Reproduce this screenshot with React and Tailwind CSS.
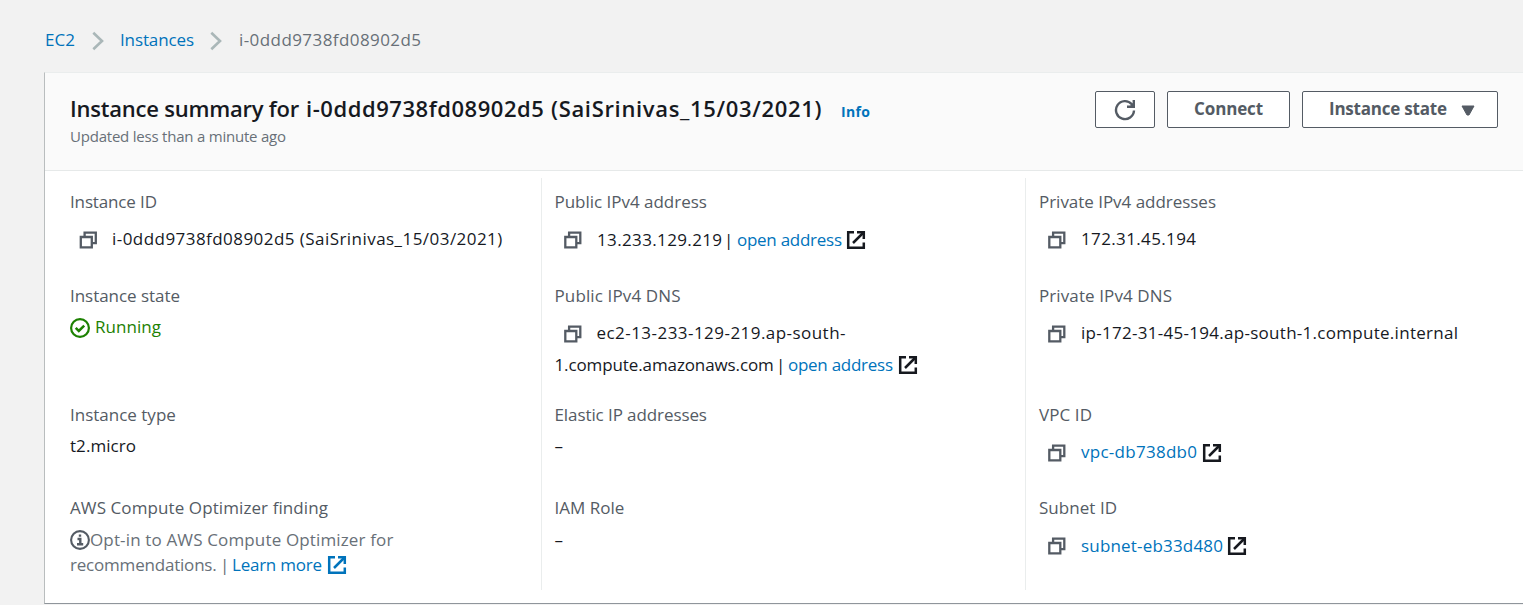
import React from "react";

const CopyIcon = ({ className = "translate-y-px" }) => (
  <svg className={`mr-[13px] ml-[9px] size-[20px] shrink-0 ${className}`} viewBox="0 0 20 20" fill="none" stroke="#545b64" strokeWidth="2.3">
    <path d="M1.800 7h11v10.300h-11z" />
    <path d="M5.600 7V2.600h11.200v10.600h-4" />
  </svg>
);

const ExternalIcon = ({ className }) => (
  <svg className={`size-[20px] shrink-0 ${className}`} viewBox="0 0 20 20" fill="none" stroke="currentColor" strokeWidth="2.5">
    <path d="M8 2.200H2.200v15.600h15.600V12.500" />
    <path d="M11 2.200h6.800V9" />
    <path d="M7 13 17.500 2.500" />
  </svg>
);

const Chevron = ({ className }) => (
  <svg className={`h-[20px] w-[13px] shrink-0 translate-y-px ${className}`} viewBox="0 0 13 20" fill="none" stroke="#aab7b8" strokeWidth="2.6">
    <path d="m1.300 1.800 8.700 8.200-8.700 8.200" />
  </svg>
);

const Field = ({ label, spacing = "", height, children }) => (
  <div className={`flex flex-col ${height}`}>
    <div className={`h-6 text-[#545b64] leading-6 ${spacing}`}>{label}</div>
    {children}
  </div>
);

const Plain = ({ children, className = "mt-[6px]" }) => <div className={`flex h-[25px] items-center leading-[25px] ${className}`}>{children}</div>;
const Line = ({ children, className = "" }) => <div className={`flex h-8 items-center leading-8 ${className}`}>{children}</div>;
const Link = ({ children, className = "" }) => (
  <a href="#" className={`text-[#0073bb] ${className}`}>
    {children}
  </a>
);

export default function App() {
  return (
    <div className="h-[605px] w-[1523px] overflow-hidden bg-[#f2f2f2] pl-[44px] font-['Open_Sans',sans-serif] text-[17px] whitespace-nowrap text-[#16191f]">
      <nav className="flex h-[72px] items-center pt-[7px] pl-px leading-6">
        <Link className="w-[47px] tracking-[0.06px]">EC2</Link>
        <Chevron className="mr-[15px]" />
        <Link className="w-[90px] tracking-[-0.125px]">Instances</Link>
        <Chevron className="mr-[16px]" />
        <span className="tracking-[0.422px] text-[#687078]">i-0ddd9738fd08902d5</span>
      </nav>

      <main className="h-[532px] border-t border-b border-l border-t-[#eaeded] border-b-[#8f959b] border-l-[#b9bdbe] bg-white">
        <header className="flex h-[98px] justify-between border-b border-[#e6e9e9] bg-[#fafafa] pr-[25px] pl-[25px]">
          <div className="pt-[19px]">
            <div className="flex h-[32px] items-baseline leading-[32px]">
              <h1 className="flex w-[771px] text-[22px] font-semibold">
                <span className="w-[236px] tracking-[-0.22px]">Instance summary for </span>
                <span className="w-[245px] tracking-[0.55px]">i-0ddd9738fd08902d5 </span>
                <span className="tracking-[0.67px]">(SaiSrinivas_15/03/2021)</span>
              </h1>
              <Link className="text-[14px] font-bold tracking-[0.35px]">Info</Link>
            </div>
            <p className="mt-px text-[15px] leading-[22px] tracking-[-0.218px] text-[#687078]">Updated less than a minute ago</p>
          </div>
          <div className="flex gap-3 pt-[18px] font-bold text-[#545b64]">
            <button className="flex h-[37px] w-[60px] items-center justify-center rounded-[2px] border border-[#545b64] bg-white">
              <svg className="size-[22px]" viewBox="0 0 22 22" fill="none" stroke="currentColor" strokeWidth="2.4">
                <path d="M20 11.500A9 9 0 1 1 17.800 5.200L19.700 7.300" />
                <path d="M19.800 1v6.800H13" />
                <path d="M15.500 7.500 19.500 3.500V7.500z" fill="currentColor" stroke="none" />
              </svg>
            </button>
            <button className="flex h-[37px] w-[123px] items-center justify-center rounded-[2px] border border-[#545b64] bg-white pb-[2px] tracking-[-0.145px]">Connect</button>
            <button className="flex h-[37px] w-[196px] items-center rounded-[2px] border border-[#545b64] bg-white pb-[2px] pl-[26px] tracking-[-0.215px]">
              Instance state
              <svg className="ml-[14px] h-[11px] w-[14px] translate-y-[2px]" viewBox="0 0 14 11" fill="currentColor" stroke="currentColor" strokeLinejoin="round">
                <path d="M1 1h12L8 10H6z" />
              </svg>
            </button>
          </div>
        </header>

        <div className="flex pt-[7px]">
          <section className="h-[412px] w-[496px] pt-3 pl-[25px]">
            <Field label="Instance ID" spacing="tracking-[-0.14px]" height="h-[94px]">
              <Line className="mt-[9px]">
                <CopyIcon />
                <span className="tracking-[0.45px]">i-0ddd9738fd08902d5 (SaiSrinivas_15/03/2021)</span>
              </Line>
            </Field>
            <Field label="Instance state" spacing="tracking-[-0.04px]" height="h-[119px]">
              <Plain className="mt-[6px] text-[#1d8102]">
                <svg className="mr-[5px] size-[20px] translate-y-px" viewBox="0 0 20 20" fill="none" stroke="currentColor" strokeWidth="2.2">
                  <circle cx="10" cy="10" r="8.900" />
                  <path d="m5.700 9.900 3.100 3 5.400-5.300" strokeWidth="2.500" />
                </svg>
                <span className="tracking-[0.05px]">Running</span>
              </Plain>
            </Field>
            <Field label="Instance type" height="h-[93px]">
              <Plain>
                <span className="tracking-[0.06px]">t2.micro</span>
              </Plain>
            </Field>
            <Field label="AWS Compute Optimizer finding" spacing="tracking-[0.094px]" height="h-[94px]">
              <Plain className="mt-[7px] text-[#687078]">
                <svg className="size-[20px] shrink-0" viewBox="0 0 20 20" fill="none" stroke="#545b64" strokeWidth="2.1">
                  <circle cx="10" cy="10" r="8.900" />
                  <path d="M10 4.500v2.300M7.500 9h2.800v5M7 14.300h6.200" strokeWidth="2.400" />
                </svg>
                <span className="tracking-[0.145px]">Opt-in to AWS Compute Optimizer for</span>
              </Plain>
              <div className="flex h-[25px] items-center leading-[25px] text-[#687078]">
                <span className="w-[150px] tracking-[-0.2px]">recommendations. </span>
                <span className="w-[12px]">| </span>
                <Link className="flex items-center tracking-[-0.235px]">
                  Learn more <ExternalIcon className="ml-[5px]" />
                </Link>
              </div>
            </Field>
          </section>

          <section className="h-[412px] w-[484px] border-l border-[#eaeded] pt-3 pl-[12.5px]">
            <Field label="Public IPv4 address" spacing="tracking-[-0.02px]" height="h-[94px]">
              <Line className="mt-[10px]">
                <CopyIcon className="-translate-x-[0.5px]" />
                <span className="w-[127.5px] pl-[0.5px] tracking-[0.367px]">13.233.129.219 </span>
                <span className="w-[13px]">| </span>
                <Link className="tracking-[-0.269px]">open address</Link>
                <ExternalIcon className="ml-[4px]" />
              </Line>
            </Field>
            <Field label="Public IPv4 DNS" spacing="tracking-[0.125px]" height="h-[119px]">
              <Line className="mt-[9px]">
                <CopyIcon className="-translate-x-[0.5px] translate-y-px" />
                <span className="tracking-[0.455px]">ec2-13-233-129-219.ap-south-</span>
              </Line>
              <Line>
                <span className="w-[221.5px] tracking-[-0.11px]">1.compute.amazonaws.com </span>
                <span className="w-[12px]">| </span>
                <Link className="tracking-[-0.269px]">open address</Link>
                <ExternalIcon className="ml-[5px]" />
              </Line>
            </Field>
            <Field label="Elastic IP addresses" spacing="tracking-[-0.09px]" height="h-[93px]">
              <Plain>–</Plain>
            </Field>
            <Field label="IAM Role" height="h-[94px]">
              <Plain className="mt-[7px]">–</Plain>
            </Field>
          </section>

          <section className="h-[412px] grow border-l border-[#eaeded] pt-3 pl-[13px]">
            <Field label="Private IPv4 addresses" spacing="tracking-[-0.03px]" height="h-[94px]">
              <Line className="mt-[9px]">
                <CopyIcon className="-translate-x-[0.5px] translate-y-px" />
                <span className="tracking-[0.367px]">172.31.45.194</span>
              </Line>
            </Field>
            <Field label="Private IPv4 DNS" spacing="tracking-[0.1px]" height="h-[119px]">
              <Line className="mt-[9px]">
                <CopyIcon className="-translate-x-[0.5px] translate-y-px" />
                <span className="tracking-[0.282px]">ip-172-31-45-194.ap-south-1.compute.internal</span>
              </Line>
            </Field>
            <Field label="VPC ID" spacing="tracking-[0.086px]" height="h-[93px]">
              <Line className="mt-[9px]">
                <CopyIcon className="-translate-x-[0.5px] translate-y-px" />
                <Link className="tracking-[0.274px]">vpc-db738db0</Link>
                <ExternalIcon className="ml-[4.5px] translate-y-px" />
              </Line>
            </Field>
            <Field label="Subnet ID" spacing="tracking-[0.04px]" height="h-[94px]">
              <Line className="mt-[10px]">
                <CopyIcon className="-translate-x-[0.5px]" />
                <Link className="tracking-[0.187px]">subnet-eb33d480</Link>
                <ExternalIcon className="ml-[4px]" />
              </Line>
            </Field>
          </section>
        </div>
      </main>
    </div>
  );
}
